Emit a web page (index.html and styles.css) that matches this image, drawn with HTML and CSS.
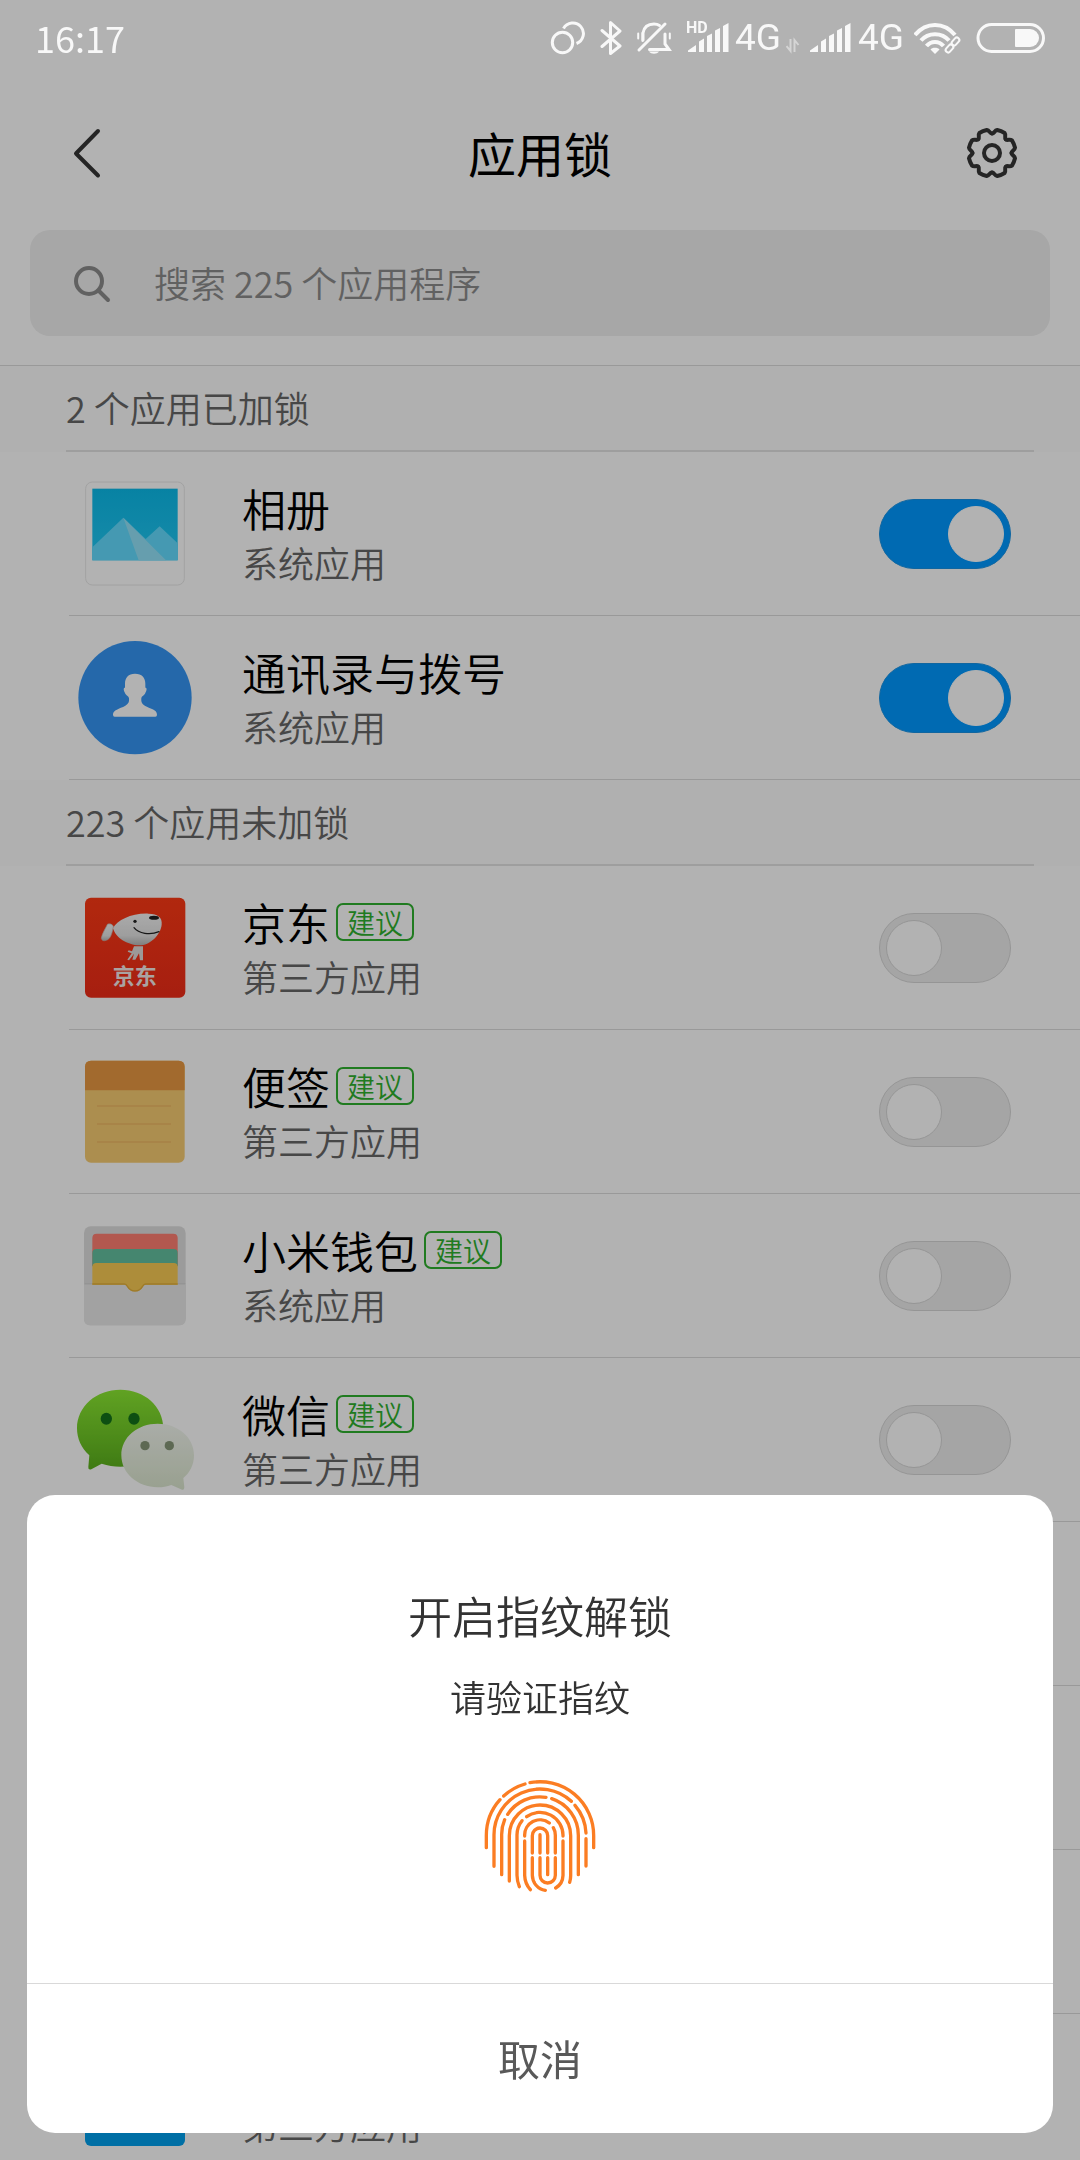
FILE: index.html
```html
<!DOCTYPE html>
<html lang="zh-CN">
<head>
  <meta charset="UTF-8">
  <meta name="viewport" content="width=device-width, initial-scale=1.0">
  <title>应用锁</title>
  <link rel="stylesheet" href="styles.css">
</head>
<body>
  <div class="status-bar">
    <span class="time">16:17</span>
    <div class="status-icons">
      <svg width="40" height="34" viewBox="547 21 40 34" fill="none" stroke="currentColor" stroke-width="3">
        <circle cx="561.5" cy="42.5" r="10.2"/>
        <path d="M562.5 28.5A10.6 10.6 0 1 1 575.5 43.5"/>
      </svg>
      <svg width="25" height="34" viewBox="597 21 25 34" fill="none" stroke="currentColor" stroke-width="3" stroke-linejoin="round" stroke-linecap="round">
        <path d="M601 30.500L619 46L609.500 53.500V22.500L619 31L601 46.500"/>
      </svg>
      <svg width="43" height="34" viewBox="632 21 43 34" fill="none" stroke="currentColor" stroke-width="3" stroke-linecap="round">
        <path d="M638 50L664 24"/>
        <path d="M642 40V33C643 27 647 24 653 24C655 24 657 24.500 658.500 25.500"/>
        <path d="M648.500 49.500H668L664 44V34"/>
        <path d="M641.500 33V41M637.200 33.500V38.500M668.800 33.500V38.500" stroke-width="2"/>
        <path d="M648 51.500H658C656 54.500 650 54.500 648 51.500Z" fill="currentColor" stroke="none"/>
      </svg>
      <div class="signal">
        <svg width="44" height="50" viewBox="684 13 44 50" fill="currentColor">
          <text x="684" y="33" class="hd">HD</text>
          <path d="M686 52V50.500L694 45V52ZM697 52V41.500L702 38.500V52ZM705 52V36L710 33.500V52ZM713 52V30.500L718 28V52ZM721 52V26L726.500 23V52Z"/>
        </svg>
        <span class="network">4G</span>
        <svg class="data" width="14" height="34" viewBox="788 21 14 34" fill="none" stroke="currentColor" stroke-width="2">
          <path d="M792.500 39V51L788.500 46M796.500 52V40L800.500 45"/>
        </svg>
      </div>
      <div class="signal">
        <svg width="43" height="34" viewBox="685 21 43 34" fill="currentColor">
          <path d="M685 52V50.500L693 45V52ZM696 52V41.500L701 38.500V52ZM704 52V36L709 33.500V52ZM712 52V30.500L717 28V52ZM720 52V26L725.500 23V52Z"/>
        </svg>
        <span class="network">4G</span>
      </div>
      <svg width="48" height="34" viewBox="914 21 48 34" fill="none" stroke="currentColor" stroke-width="4">
        <path d="M915 35C926 21.500 944 21.500 955 35M921 40.500C928 32 942 32 949 40.500M926.500 46C931 40.500 939 40.500 943.500 46"/>
        <path d="M930.500 49.500C932 47 938 47 939.500 49.500L935 54Z" fill="currentColor" stroke="none"/>
        <g stroke-width="2">
          <rect x="953" y="37" width="5" height="9" rx="2.500" transform="rotate(42 955.500 41.500)"/>
          <rect x="947" y="44" width="5" height="9" rx="2.500" transform="rotate(42 949.500 48.500)"/>
        </g>
      </svg>
      <svg width="73" height="34" viewBox="972 21 73 34" fill="none" stroke="currentColor" stroke-width="3">
        <rect x="978" y="24.500" width="65.500" height="27" rx="13.500"/>
        <path d="M1016 29H1030A9 9 0 0 1 1030 47H1016Q1015 47 1015 46V30Q1015 29 1016 29Z" fill="currentColor" stroke="none"/>
      </svg>
    </div>
  </div>

  <main class="page">
    <header class="header">
      <button class="icon-btn" aria-label="返回">
        <svg width="52" height="52" viewBox="0 0 52 52" fill="none" stroke="#363636" stroke-width="4" stroke-linecap="round" stroke-linejoin="round">
          <path d="M36 4L14 26.500L36 48.500"/>
        </svg>
      </button>
      <h1>应用锁</h1>
      <button class="icon-btn" aria-label="设置">
        <svg width="52" height="52" viewBox="-26 -26 52 52" fill="none" stroke="#363636" stroke-width="4" stroke-linecap="round">
          <circle r="8"/>
          <path id="tooth" d="M0 -19.500C2.500 -19.500 2.300 -22.600 5.200 -23A23.600 23.600 0 0 1 12.600 -19.950C14.350 -17.600 12.020 -15.550 13.800 -13.800"/>
          <use href="#tooth" transform="rotate(45)"/>
          <use href="#tooth" transform="rotate(90)"/>
          <use href="#tooth" transform="rotate(135)"/>
          <use href="#tooth" transform="rotate(180)"/>
          <use href="#tooth" transform="rotate(225)"/>
          <use href="#tooth" transform="rotate(270)"/>
          <use href="#tooth" transform="rotate(315)"/>
        </svg>
      </button>
    </header>

    <label class="search">
      <svg width="40" height="40" viewBox="0 0 40 40" fill="none" stroke="#8c8c8c" stroke-width="4" stroke-linecap="round">
        <circle cx="17" cy="18" r="13"/>
        <path d="M26.500 27.500L36 37"/>
      </svg>
      <input type="search" placeholder="搜索 225 个应用程序" aria-label="搜索应用">
    </label>

    <section>
      <h2>2 个应用已加锁</h2>
      <ul>
        <li class="app">
          <svg class="app-icon" viewBox="75 70 360 360">
            <defs>
              <linearGradient id="sky" x2="0" y2="1"><stop stop-color="#0bbbea"/><stop offset="1" stop-color="#23c9f4"/></linearGradient>
            </defs>
            <rect x="107" y="97" width="296" height="309" rx="20" fill="#fff" stroke="#e8e8e8" stroke-width="3"/>
            <rect x="127" y="117" width="256" height="215" fill="url(#sky)"/>
            <path d="M127 293L220 204L287 268L329 230L383 281V332H127Z" fill="#64dcff"/>
            <path d="M220 204L348 332H266Z" fill="#93e3f9"/>
          </svg>
          <div class="app-text">
            <div class="app-name"><label for="gallery">相册</label></div>
            <p>系统应用</p>
          </div>
          <input type="checkbox" class="switch" id="gallery" checked>
        </li>
        <li class="app">
          <svg class="app-icon" viewBox="75 562 360 360">
            <circle cx="255" cy="744" r="170" fill="#3596f4"/>
            <path d="M255 672C276 672 286 684 286 702V714C292 714 290 722 286 730C283 738 275 738 274 746C273 758 276 763 286 769C302 778 321 780 321 795Q321 801 316 801H194Q189 801 189 795C189 780 208 778 226 768C235 763 238 758 237 746C236 738 228 738 225 730C221 722 219 714 225 714V702C225 684 235 672 255 672Z" fill="#fff"/>
          </svg>
          <div class="app-text">
            <div class="app-name"><label for="contacts">通讯录与拨号</label></div>
            <p>系统应用</p>
          </div>
          <input type="checkbox" class="switch" id="contacts" checked>
        </li>
      </ul>
    </section>

    <section>
      <h2>223 个应用未加锁</h2>
      <ul>
        <li class="app">
          <svg class="app-icon" viewBox="45 82 360 360">
            <defs>
              <linearGradient id="jd" x2="0" y2="1"><stop stop-color="#fe3a15"/><stop offset="1" stop-color="#ef2c17"/></linearGradient>
              <linearGradient id="dog" x2="0" y2="1"><stop stop-color="#f4f4f4"/><stop offset=".7" stop-color="#e2e2e2"/><stop offset="1" stop-color="#b5b5b5"/></linearGradient>
            </defs>
            <rect x="75" y="114" width="301" height="300" rx="18" fill="url(#jd)"/>
            <path d="M160 199Q154 190 143 193C137 205 126 222 124 236Q126 246 138 242C152 238 155 222 158 211Z" fill="url(#dog)" stroke="#c5bcb8" stroke-width="2"/>
            <path d="M159 205C172 182 215 160 265 162C295 163 307 173 305 195C302 226 270 257 238 257C202 256 166 234 159 205Z" fill="url(#dog)"/>
            <ellipse cx="282" cy="174" rx="15" ry="6" fill="#222"/>
            <circle cx="225" cy="185" r="5" fill="#222"/>
            <path d="M222 204C236 222 270 227 297 216" fill="none" stroke="#222" stroke-width="4" stroke-linecap="round"/>
            <path d="M222 260H249V302H240L237 281L226 300H217L222 282L207 302L202 300L215 281L203 276L206 272L216 275Z" fill="#e0dcda"/>
            <text class="jd-text" x="224" y="374" text-anchor="middle">京东</text>
          </svg>
          <div class="app-text">
            <div class="app-name"><label for="jd-app">京东</label><span class="badge">建议</span></div>
            <p>第三方应用</p>
          </div>
          <input type="checkbox" class="switch" id="jd-app">
        </li>
        <li class="app">
          <svg class="app-icon" viewBox="45 574 360 360">
            <rect x="75" y="603" width="299" height="306" rx="18" fill="#f7cc72"/>
            <path d="M75 692V621Q75 603 93 603H356Q374 603 374 621V692Z" fill="#e99943"/>
            <path d="M111 739H333M111 793H333M111 847H333" stroke="#efb964" stroke-width="4"/>
          </svg>
          <div class="app-text">
            <div class="app-name"><label for="notes">便签</label><span class="badge">建议</span></div>
            <p>第三方应用</p>
          </div>
          <input type="checkbox" class="switch" id="notes">
        </li>
        <li class="app">
          <svg class="app-icon" viewBox="45 76 360 360">
            <rect x="72" y="110" width="305" height="297" rx="20" fill="#dfdfdf"/>
            <path d="M97 230V145Q97 132 110 132H340Q353 132 353 145V230Z" fill="#ff7e71"/>
            <path d="M97 230V190Q97 178 109 178H341Q353 178 353 190V230Z" fill="#64c19f"/>
            <path d="M72 285H377V387Q377 407 357 407H92Q72 407 72 387Z" fill="#e9e9e9"/>
            <path d="M74 282H376" stroke="#d4d4d4" stroke-width="4"/>
            <path d="M97 285V232Q97 220 109 220H341Q353 220 353 232V285H257C246 285 250 304 225 304C200 304 204 285 193 285Z" fill="#f8cb54"/>
            <path d="M97 283H193C206 283 200 304 225 304C250 304 244 283 257 283H353" fill="none" stroke="#e4b13c" stroke-width="4"/>
          </svg>
          <div class="app-text">
            <div class="app-name"><label for="wallet">小米钱包</label><span class="badge">建议</span></div>
            <p>系统应用</p>
          </div>
          <input type="checkbox" class="switch" id="wallet">
        </li>
        <li class="app">
          <svg class="app-icon" viewBox="45 568 360 360">
            <defs>
              <linearGradient id="green" x2="0" y2="1"><stop stop-color="#8be932"/><stop offset="1" stop-color="#5bb01d"/></linearGradient>
              <linearGradient id="pale" x2="0" y2="1"><stop stop-color="#f3f7f0"/><stop offset="1" stop-color="#dbe6ce"/></linearGradient>
            </defs>
            <path d="M181 600C253 600 310 650 310 716C310 781 253 831 181 831C162 831 143 828 125 822L94 839Q84 842 85 832L88 797C64 776 51 747 51 716C51 650 109 600 181 600Z" fill="url(#green)"/>
            <ellipse cx="139" cy="687" rx="17" ry="18" fill="#13711b"/>
            <ellipse cx="222" cy="687" rx="17" ry="18" fill="#13711b"/>
            <path d="M293 702C353 702 402 742 402 797C402 825 390 849 370 865L373 893Q373 904 363 899L334 886C321 891 308 893 293 893C233 893 184 851 184 797C184 742 233 702 293 702Z" fill="url(#pale)"/>
            <circle cx="255" cy="768" r="14" fill="#869778"/>
            <circle cx="328" cy="768" r="14" fill="#869778"/>
          </svg>
          <div class="app-text">
            <div class="app-name"><label for="wechat">微信</label><span class="badge">建议</span></div>
            <p>第三方应用</p>
          </div>
          <input type="checkbox" class="switch" id="wechat">
        </li>
        <li class="app"></li>
        <li class="app"></li>
        <li class="app"></li>
        <li class="app">
          <svg class="app-icon" viewBox="0 0 120 120">
            <rect x="10" y="10" width="100" height="101" rx="6" fill="#00a0ec"/>
          </svg>
          <div class="app-text">
            <div class="app-name"></div>
            <p>第三方应用</p>
          </div>
        </li>
      </ul>
    </section>
  </main>

  <div class="scrim"></div>

  <div class="dialog" role="dialog" aria-labelledby="dialog-title">
    <div class="dialog-body">
      <h3 id="dialog-title">开启指纹解锁</h3>
      <p>请验证指纹</p>
      <svg width="112" height="114" viewBox="132 116 336 342" fill="none" stroke="#fb7d23" stroke-width="10" stroke-linecap="round">
        <path d="M139 322V286A161 161 0 0 1 180 178M191 167A161 161 0 0 1 255 131M270 127A161 161 0 0 1 461 286V322"/>
        <path d="M162 378V286A138 138 0 0 1 394 183M405 195A138 138 0 0 1 438 278M438 295V377"/>
        <path d="M185 403V286A115 115 0 0 1 194 238M203 222A115 115 0 0 1 318 171M335 175A115 115 0 0 1 415 286V403"/>
        <path d="M208 422V286A92 92 0 0 1 392 286V405A69 69 0 0 1 389 426"/>
        <path d="M238 439A92 92 0 0 1 231 405V286A69 69 0 0 1 246 241M260 229A69 69 0 0 1 369 287M369 302V405A46 46 0 0 1 347 443"/>
        <path d="M254 287A46 46 0 0 1 328 248M340 262A46 46 0 0 1 346 286V338M254 302V405A69 69 0 0 0 271 448"/>
        <path d="M277 338V286A23 23 0 0 1 323 286V338M300 283V338"/>
        <path d="M277 352V405A46 46 0 0 0 316 450M300 352V405A23 23 0 0 0 346 405V352M323 352V403"/>
      </svg>
    </div>
    <button class="cancel">取消</button>
  </div>
</body>
</html>
```
FILE: styles.css
```css
* {
  margin: 0;
  padding: 0;
  box-sizing: border-box;
}

body {
  font-family: "Noto Sans CJK SC", sans-serif;
  font-weight: 350;
  background-color: #fff;
  color: #000;
  height: 100vh;
  overflow: hidden;
}

ul {
  list-style: none;
}

svg {
  display: block;
  flex-shrink: 0;
}

/* status bar stays bright above the scrim */
.status-bar {
  position: relative;
  z-index: 2;
  display: flex;
  justify-content: space-between;
  align-items: center;
  height: 76px;
  padding: 0 35px;
  color: #f8f8f8;
}

.time {
  padding-bottom: 2px;
  font-size: 36px;
  line-height: 36px;
  font-weight: 400;
}

.status-icons {
  display: flex;
  align-items: center;
  gap: 10px;
}

.signal {
  display: flex;
  align-items: center;
  gap: 5px;
}

.network {
  font-family: Roboto, sans-serif;
  font-size: 37px;
  line-height: 40px;
  font-weight: 400;
}

.hd {
  font-family: Roboto, sans-serif;
  font-size: 16px;
  font-weight: 700;
}

.data {
  opacity: 0.5;
}

.header {
  display: flex;
  justify-content: space-between;
  align-items: center;
  height: 154px;
  padding: 0 62px;
}

.header h1 {
  padding-bottom: 2px;
  font-size: 48px;
  line-height: 60px;
  font-weight: 400;
}

.icon-btn {
  background: none;
  border: none;
  cursor: pointer;
}

.search {
  display: flex;
  align-items: center;
  gap: 42px;
  height: 106px;
  margin: 0 30px 29px;
  padding: 0 42px;
  border-radius: 20px;
  background-color: #efefef;
}

.search input {
  flex: 1;
  min-width: 0;
  padding-bottom: 3px;
  border: none;
  outline: none;
  background: none;
  font: inherit;
  font-size: 36px;
}

.search input::placeholder {
  color: #8c8c8c;
}

section:first-of-type {
  border-top: 1px solid #dbdbdb;
}

h2 {
  position: relative;
  height: 86px;
  padding-left: 66px;
  background-color: #fcfcfc;
  color: #666;
  font-size: 36px;
  line-height: 82px;
  font-weight: 350;
}

h2::after {
  content: "";
  position: absolute;
  left: 66px;
  right: 46px;
  bottom: 0;
  height: 2px;
  background-color: #e2e2e2;
}

.app {
  display: flex;
  align-items: center;
  height: 164px;
  margin-left: 69px;
  padding: 0 69px 0 6px;
  border-bottom: 1px solid #dbdbdb;
}

.app-icon {
  width: 120px;
  height: 120px;
  margin-bottom: 1px;
}

.app-text {
  flex: 1;
  padding: 0 0 1px 47px;
}

.app-name {
  display: flex;
  align-items: center;
  gap: 6px;
  height: 58px;
  font-size: 44px;
  line-height: 58px;
}

.app-text p {
  color: #666;
  font-size: 36px;
  line-height: 50px;
}

.badge {
  height: 38px;
  padding: 0 9px;
  border: 2px solid #2fb02e;
  border-radius: 7px;
  color: #2fb02e;
  font-size: 28px;
  line-height: 34px;
}

.switch {
  appearance: none;
  display: flex;
  align-items: center;
  width: 132px;
  height: 70px;
  padding: 0 6px;
  border: 1px solid #d6d6d6;
  border-radius: 35px;
  background-color: #ededed;
  cursor: pointer;
}

.switch::before {
  content: "";
  width: 54px;
  height: 54px;
  border: 1px solid #d6d6d6;
  border-radius: 50%;
  background-color: #fff;
}

.switch:checked {
  justify-content: flex-end;
  border-color: #1893e6;
  background-color: #0099ff;
}

.switch:checked::before {
  border-color: #fff;
}

.jd-text {
  fill: #f3eae8;
  font-size: 66px;
  font-weight: 700;
}

.scrim {
  position: fixed;
  inset: 0;
  z-index: 1;
  background-color: rgba(0, 0, 0, 0.3);
}

.dialog {
  position: fixed;
  left: 27px;
  right: 27px;
  bottom: 27px;
  z-index: 3;
  border-radius: 28px;
  background-color: #fff;
  color: #333;
  overflow: hidden;
}

.dialog-body {
  display: flex;
  flex-direction: column;
  align-items: center;
  padding: 90px 0;
}

.dialog-body h3 {
  font-size: 44px;
  line-height: 60px;
  font-weight: 350;
}

.dialog-body p {
  margin: 24px 0 56px;
  font-size: 36px;
  line-height: 54px;
}

.cancel {
  display: block;
  width: 100%;
  height: 150px;
  padding-bottom: 2px;
  border: none;
  border-top: 1px solid #d9d9d9;
  background: none;
  color: #595959;
  font: inherit;
  font-size: 42px;
  font-weight: 400;
  cursor: pointer;
}
```
